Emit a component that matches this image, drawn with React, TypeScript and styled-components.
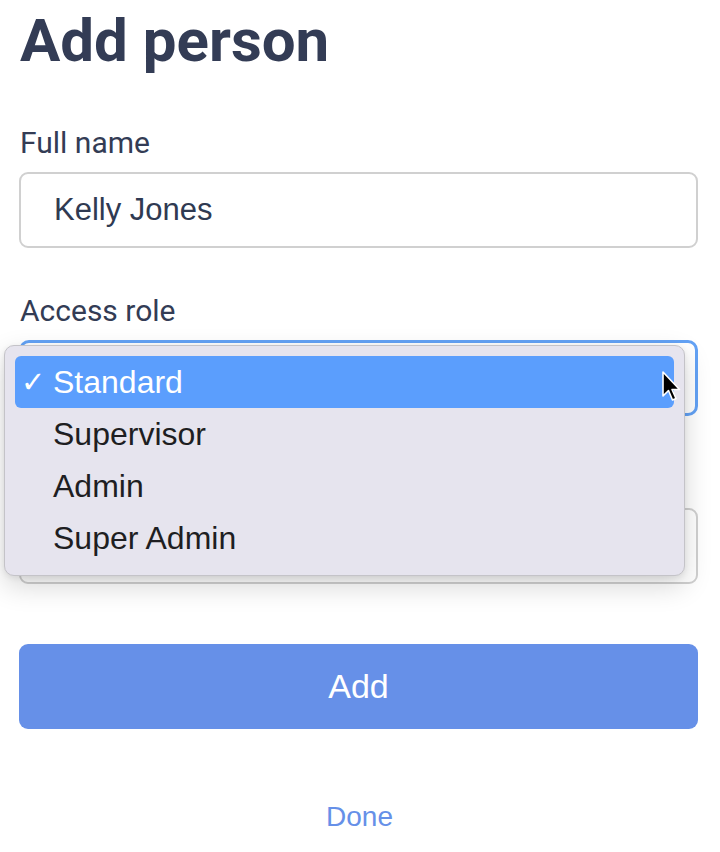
import React from 'react';
import styled, { createGlobalStyle } from 'styled-components';

const ROLES = ['Standard', 'Supervisor', 'Admin', 'Super Admin'];

const GlobalStyle = createGlobalStyle`
  html, body {
    margin: 0;
    padding: 0;
    background: #ffffff;
  }
  body {
    font-family: Roboto, 'Liberation Sans', sans-serif;
  }
`;

function Cursor() {
  return (
    <CursorIcon width="22" height="34" viewBox="0 0 22 34">
      <path
        d="M2 2 L2 26 L7.5 20.5 L11.5 30 L15 28.5 L11 19.5 L18.5 19.5 Z"
        fill="#000"
        stroke="#fff"
        strokeWidth="1.6"
        strokeLinejoin="round"
      />
    </CursorIcon>
  );
}

function App() {
  const selected = 'Standard';

  return (
    <Page>
      <GlobalStyle />
      <Title>Add person</Title>

      <Field>
        <Label>Full name</Label>
        <Input defaultValue="Kelly Jones" />
      </Field>

      <Field>
        <Label>Access role</Label>
        <SelectWrap>
          <SelectBox />
          <Menu>
            {ROLES.map(role => (
              <Option key={role} active={role === selected}>
                <Check>{role === selected ? '✓' : ''}</Check>
                {role}
              </Option>
            ))}
          </Menu>
          <Cursor />
        </SelectWrap>
      </Field>

      {/* third field sits under the open menu; its label is hidden there */}
      <Field>
        <Label aria-hidden="true" />
        <Input defaultValue="" />
      </Field>

      <AddButton>Add</AddButton>
      <DoneLink>Done</DoneLink>
    </Page>
  );
}

const Page = styled.div`
  padding: 0 22px 40px 19px;
  display: flex;
  flex-direction: column;
`;

const Title = styled.h1`
  margin: 5px 0 0;
  font-family: Roboto, sans-serif;
  font-weight: 700;
  font-size: 60px;
  line-height: 72px;
  color: #333c55;
  padding-left: 1px;
`;

const Field = styled.div`
  display: flex;
  flex-direction: column;
  gap: 11px;
  margin-top: 48px;

  & + & {
    margin-top: 45px;
  }
`;

const Label = styled.label`
  display: block;
  min-height: 36px;
  font-family: Roboto, sans-serif;
  font-size: 30px;
  line-height: 36px;
  color: #333c55;
  padding-left: 1px;
`;

const Input = styled.input`
  box-sizing: border-box;
  height: 76px;
  width: 100%;
  border: 2px solid #d0d0d0;
  border-radius: 9px;
  padding: 0 0 0 33px;
  font-family: 'Liberation Sans', Arial, sans-serif;
  font-size: 31px;
  color: #2f3a52;
  background: #fff;
  outline: none;
`;

const SelectWrap = styled.div`
  position: relative;
`;

const SelectBox = styled.div`
  box-sizing: border-box;
  height: 76px;
  border: 3px solid #63a2f5;
  border-radius: 10px;
  background: #fff;
`;

const Menu = styled.ul`
  position: absolute;
  top: 5px;
  left: -15px;
  width: 681px;
  box-sizing: border-box;
  margin: 0;
  padding: 10px 10px 11px;
  list-style: none;
  background: #e6e4ee;
  border: 1px solid #c4c3c8;
  border-radius: 10px;
  box-shadow: 0 10px 28px rgba(0, 0, 0, 0.16), 0 2px 6px rgba(0, 0, 0, 0.08);
  z-index: 2;
`;

const Option = styled.li<{ active?: boolean }>`
  display: flex;
  align-items: center;
  height: 52px;
  padding-left: 6px;
  border-radius: 6px;
  font-family: 'Liberation Sans', Arial, sans-serif;
  font-size: 32px;
  color: ${p => (p.active ? '#ffffff' : '#1e1e22')};
  background: ${p => (p.active ? '#5b9efd' : 'transparent')};
`;

const Check = styled.span`
  display: inline-block;
  width: 32px;
  font-family: 'DejaVu Sans', sans-serif;
  font-size: 29px;
  line-height: 1;
`;

const CursorIcon = styled.svg`
  position: absolute;
  top: 30px;
  left: 642px;
  z-index: 3;
`;

const AddButton = styled.button`
  margin-top: 60px;
  height: 85px;
  border: none;
  border-radius: 9px;
  background: #6690e8;
  color: #ffffff;
  font-family: 'Liberation Sans', Arial, sans-serif;
  font-size: 34px;
`;

const DoneLink = styled.a`
  margin-top: 71px;
  align-self: center;
  font-family: 'Liberation Sans', Arial, sans-serif;
  font-size: 28px;
  line-height: 34px;
  color: #6690e8;
  padding-left: 2px;
`;

export default App;
